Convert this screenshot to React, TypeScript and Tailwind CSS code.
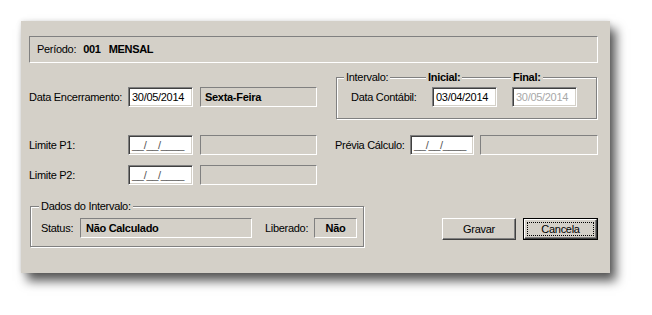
import React from "react";

const font = { fontFamily: '"Liberation Sans", Arial, sans-serif' };

function Sunken({ className = "", children }: { className?: string; children?: React.ReactNode }) {
  return (
    <div
      className={`flex items-center border border-t-[#808080] border-l-[#808080] border-r-white border-b-white ${className}`}
    >
      {children}
    </div>
  );
}

function Input({ value, disabled = false, mask = false, className = "" }: { value: string; disabled?: boolean; mask?: boolean; className?: string }) {
  return (
    <div
      className={`flex h-[20px] items-center border border-t-[#808080] border-l-[#808080] border-r-white border-b-white bg-white pl-[2px] shadow-[inset_1px_1px_0_#404040,inset_-1px_-1px_0_#d4d0c8] ${className}`}
    >
      <span className={`pl-[1px] ${disabled ? "text-[#a8a8a8]" : mask ? "text-[#555]" : "text-black"}`}>{value}</span>
    </div>
  );
}

export default function App() {
  return (
    <div className="h-[315px] w-[652px] bg-white pl-[21px] pt-[21px] text-[11px] leading-[13px] tracking-[-0.3px] text-black" style={font}>
      <div className="flex h-[252px] w-[589px] flex-col bg-[#d4d0c8] pl-[8px] pr-[12px] pt-[15px] shadow-[6px_8px_10px_rgba(0,0,0,0.65),0_0_5px_rgba(0,0,0,0.12)]">
        {/* Período */}
        <Sunken className="h-[27px] w-[569px] pl-[7px]">
          <span>Período:</span>
          <span className="ml-[7px] font-bold">001</span>
          <span className="ml-[8px] font-bold">MENSAL</span>
        </Sunken>

        {/* Row 2 */}
        <div className="mt-[14px] flex h-[42px]">
          <div className="flex items-center self-start pt-[10px]">
            <span className="w-[99px]">Data Encerramento:</span>
            <Input value="30/05/2014" className="w-[65px]" />
            <Sunken className="ml-[7px] h-[20px] w-[117px] pl-[4px] font-bold">Sexta-Feira</Sunken>
          </div>
          <div className="relative ml-[19px] h-[42px] w-[261px] border border-[#808080] shadow-[1px_1px_0_#fff,inset_1px_1px_0_#fff]">
            <span className="absolute left-[7px] top-[-7px] bg-[#d4d0c8] px-[2px]">Intervalo:</span>
            <span className="absolute left-[89px] top-[-7px] bg-[#d4d0c8] px-[2px] font-bold">Inicial:</span>
            <span className="absolute left-[174px] top-[-7px] bg-[#d4d0c8] px-[2px] font-bold">Final:</span>
            <div className="flex items-center pl-[14px] pt-[9px]">
              <span className="w-[81px]">Data Contábil:</span>
              <Input value="03/04/2014" className="w-[65px]" />
              <Input value="30/05/2014" disabled className="ml-[15px] w-[65px]" />
            </div>
          </div>
        </div>

        {/* Row 3 */}
        <div className="mt-[16px] flex items-center">
          <span className="w-[99px]">Limite P1:</span>
          <Input value="__/__/____" mask className="w-[65px]" />
          <Sunken className="ml-[7px] h-[20px] w-[117px]" />
          <span className="ml-[18px] w-[75px]">Prévia Cálculo:</span>
          <Input value="__/__/____" mask className="w-[64px]" />
          <Sunken className="ml-[6px] h-[20px] w-[118px]" />
        </div>

        {/* Row 4 */}
        <div className="mt-[10px] flex items-center">
          <span className="w-[99px]">Limite P2:</span>
          <Input value="__/__/____" mask className="w-[65px]" />
          <Sunken className="ml-[7px] h-[20px] w-[117px]" />
        </div>

        {/* Row 5 */}
        <div className="mt-[21px] flex items-start">
          <div className="relative ml-[1px] h-[41px] w-[334px] border border-[#808080] shadow-[1px_1px_0_#fff,inset_1px_1px_0_#fff]">
            <span className="absolute left-[8px] top-[-7px] bg-[#d4d0c8] px-[2px]">Dados do Intervalo:</span>
            <div className="flex items-center pl-[10px] pt-[11px]">
              <span className="w-[39px]">Status:</span>
              <Sunken className="h-[20px] w-[172px] pl-[5px] font-bold">Não Calculado</Sunken>
              <span className="ml-[13px] w-[49px]">Liberado:</span>
              <Sunken className="h-[20px] w-[43px] justify-center font-bold">Não</Sunken>
            </div>
          </div>
          <div className="ml-[78px] mt-[12px] flex gap-[7px]">
            <div className="flex h-[22px] w-[74px] items-center justify-center border border-t-white border-l-white border-r-[#404040] border-b-[#404040] shadow-[inset_-1px_-1px_0_#808080]">
              Gravar
            </div>
            <div className="h-[22px] w-[75px] border border-black">
              <div className="flex h-full w-full items-center justify-center border border-t-white border-l-white border-r-[#404040] border-b-[#404040] p-[2px] shadow-[inset_-1px_-1px_0_#808080]">
                <div className="flex h-full w-full items-center justify-center border border-dotted border-black">Cancela</div>
              </div>
            </div>
          </div>
        </div>
      </div>
    </div>
  );
}
